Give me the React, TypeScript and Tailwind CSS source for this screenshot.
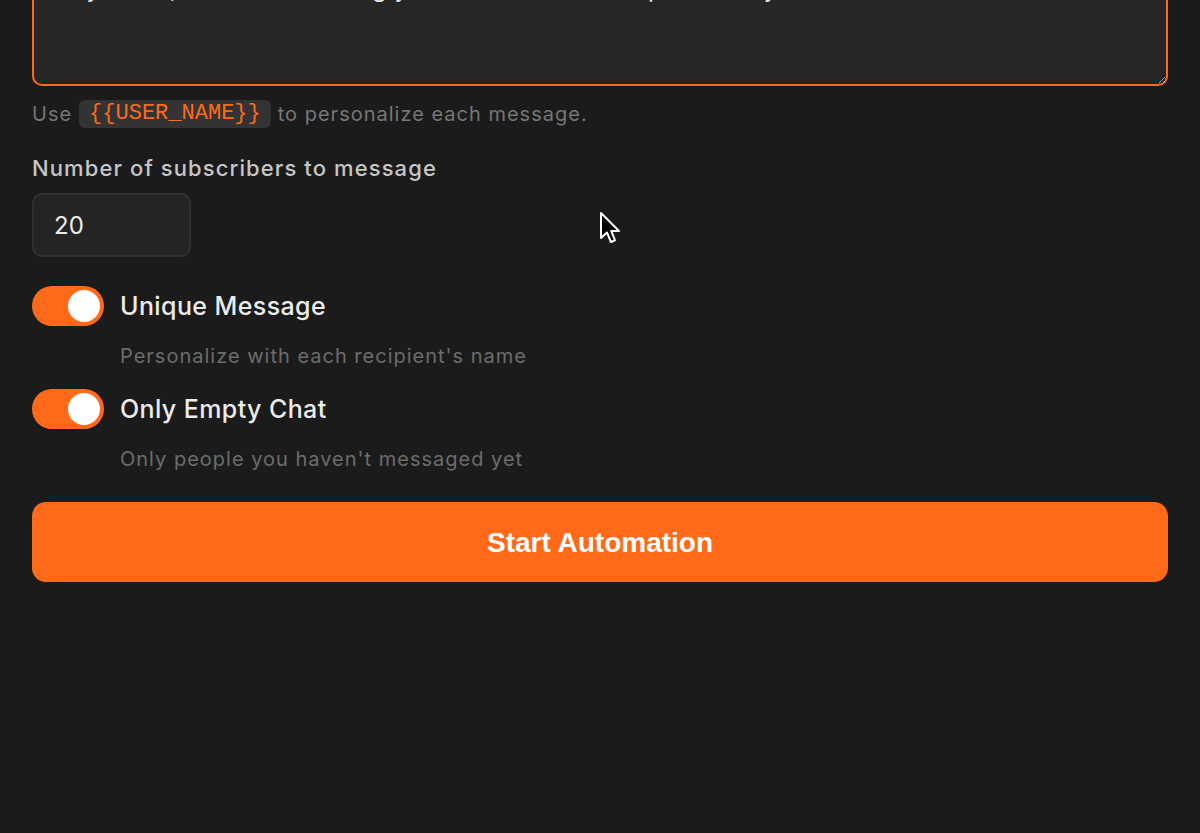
import React from "react";

function Toggle() {
  return (
    <div className="flex h-[40px] w-[72px] shrink-0 items-center justify-end rounded-full bg-[#ff6a1a] pr-[4px]">
      <div className="h-[32px] w-[32px] rounded-full bg-white" />
    </div>
  );
}

function ToggleRow({ title, desc }: { title: string; desc: string }) {
  return (
    <div className="flex flex-col">
      <div className="flex items-center gap-[16px]">
        <Toggle />
        <span className="pt-[1px] text-[25px] font-medium leading-[40px] tracking-[0.4px] text-[#ececec]">{title}</span>
      </div>
      <div className="mt-[15px] pl-[88px] pt-[1px] text-[20px] leading-[28px] tracking-[1px] text-[#6c6c6c]">{desc}</div>
    </div>
  );
}

export default function App() {
  return (
    <div
      className="relative h-[833px] w-[1200px] overflow-hidden bg-[#1b1b1b]"
      style={{ fontFamily: "Inter, 'Noto Sans', sans-serif" }}
    >
      <div className="flex flex-col px-[32px]">
        <textarea
          className="-mt-[54px] h-[140px] w-full rounded-[10px] border-2 border-[#ff6a1a] bg-[#262626] px-[20px] pt-[23px] text-[24px] leading-[36px] tracking-[0.6px] text-[#e4e4e4] outline-none"
          style={{ fontFamily: "Inter, 'Noto Sans', sans-serif" }}
          defaultValue="Hey there, I have something you'll love — a little update for you to check out!"
        />
        <div className="mt-[14px] flex items-center text-[20px] leading-[28px] tracking-[1px] text-[#767676]">
          <span>Use</span>
          <span
            className="ml-[7px] mr-[7px] rounded-[6px] bg-[#333333] px-[10px] text-[22px] leading-[28px] tracking-normal text-[#ff6a1a]"
            style={{ fontFamily: "'Liberation Mono', 'DejaVu Sans Mono', monospace" }}
          >
            {"{{USER_NAME}}"}
          </span>
          <span>to personalize each message.</span>
        </div>
        <div className="mt-[26px] text-[22px] font-medium leading-[28px] tracking-[1.1px] text-[#c6c6c6]">
          Number of subscribers to message
        </div>
        <div className="mt-[11px] flex h-[64px] w-[159px] items-center rounded-[10px] border-2 border-[#303030] bg-[#242424] px-[20px] pt-[2px] text-[24px] text-[#ececec]">
          20
        </div>
        <div className="mt-[28px]">
          <ToggleRow title="Unique Message" desc="Personalize with each recipient's name" />
        </div>
        <div className="mt-[18px]">
          <ToggleRow title="Only Empty Chat" desc="Only people you haven't messaged yet" />
        </div>
        <button
          className="mt-[29px] flex h-[80px] w-full items-center justify-center rounded-[14px] bg-[#ff6a1a] pt-[2px] text-[28px] font-bold text-white"
          style={{ fontFamily: "'Liberation Sans', Arial, sans-serif" }}
        >
          Start Automation
        </button>
      </div>
      <svg
        className="absolute left-[599px] top-[211px]"
        width="24"
        height="36"
        viewBox="0 0 24 36"
      >
        <path
          d="M2 2 L2 27 L8 21.5 L12 31 L16 29.3 L12.2 20 L20 20 Z"
          fill="#000"
          stroke="#fff"
          strokeWidth="2"
          strokeLinejoin="round"
        />
      </svg>
    </div>
  );
}
